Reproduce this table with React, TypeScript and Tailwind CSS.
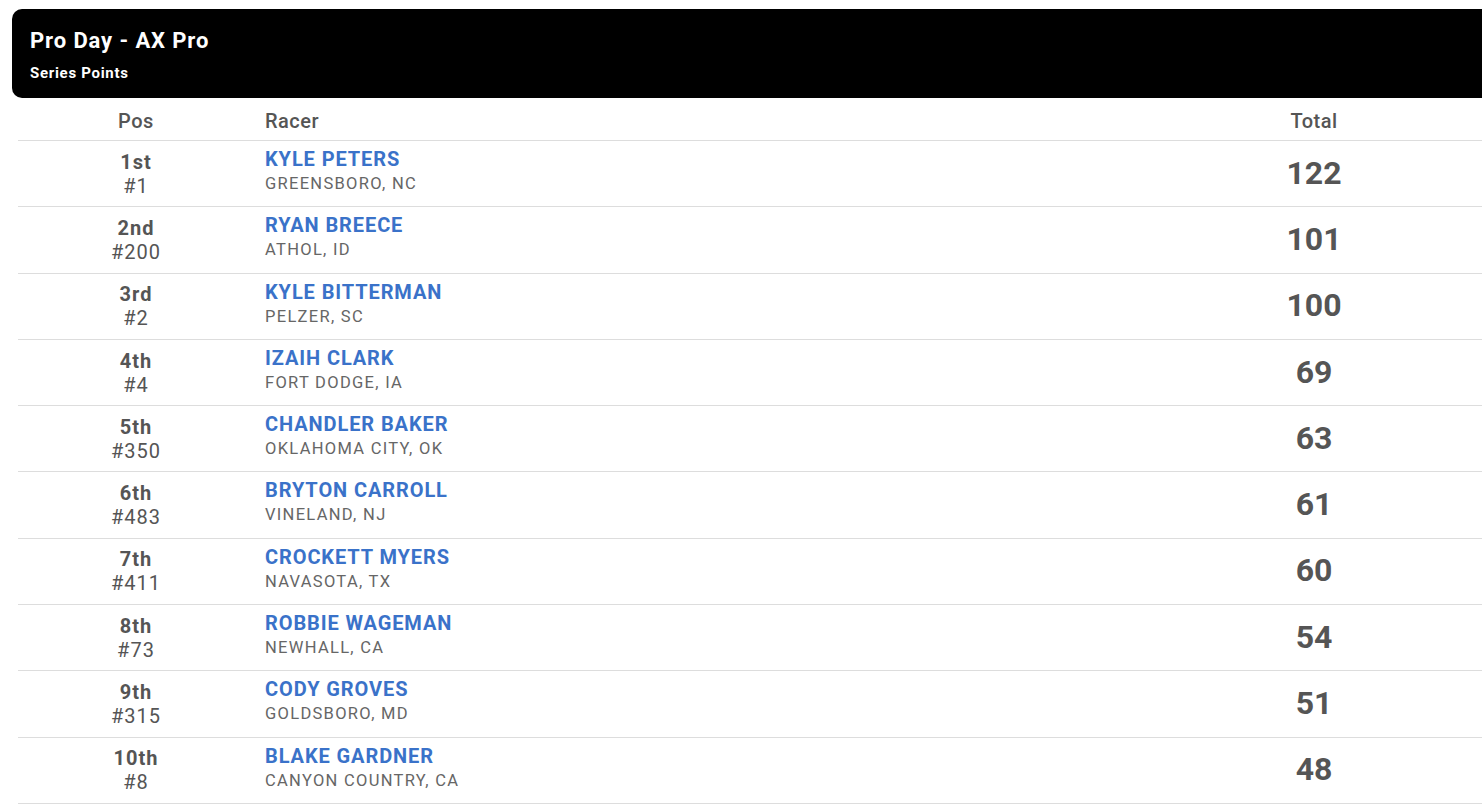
import React from 'react';

type Racer = { pos: string; num: string; name: string; city: string; total: number };

const racers: Racer[] = [
  { pos: '1st', num: '#1', name: 'KYLE PETERS', city: 'GREENSBORO, NC', total: 122 },
  { pos: '2nd', num: '#200', name: 'RYAN BREECE', city: 'ATHOL, ID', total: 101 },
  { pos: '3rd', num: '#2', name: 'KYLE BITTERMAN', city: 'PELZER, SC', total: 100 },
  { pos: '4th', num: '#4', name: 'IZAIH CLARK', city: 'FORT DODGE, IA', total: 69 },
  { pos: '5th', num: '#350', name: 'CHANDLER BAKER', city: 'OKLAHOMA CITY, OK', total: 63 },
  { pos: '6th', num: '#483', name: 'BRYTON CARROLL', city: 'VINELAND, NJ', total: 61 },
  { pos: '7th', num: '#411', name: 'CROCKETT MYERS', city: 'NAVASOTA, TX', total: 60 },
  { pos: '8th', num: '#73', name: 'ROBBIE WAGEMAN', city: 'NEWHALL, CA', total: 54 },
  { pos: '9th', num: '#315', name: 'CODY GROVES', city: 'GOLDSBORO, MD', total: 51 },
  { pos: '10th', num: '#8', name: 'BLAKE GARDNER', city: 'CANYON COUNTRY, CA', total: 48 },
];

const App = () => {
  return (
    <div className="w-[1482px] h-[806px] overflow-hidden bg-white font-['Roboto',sans-serif]">
      <div className="pt-[9px] pl-3 w-[1520px]">
        {/* header bar */}
        <div className="bg-black text-white rounded-l-[10px] h-[89px] pl-[18px] pt-[18px]">
          <div className="text-[22px] font-bold leading-[28px] tracking-[0.9px]">Pro Day - AX Pro</div>
          <div className="text-[15px] font-bold leading-[18px] mt-[9px] tracking-[0.7px]">Series Points</div>
        </div>

        <div className="ml-[6px]">
          <div className="grid grid-cols-[236px_1000px_120px_1fr] h-[43px] items-center pt-[4px] border-b border-[#dddddd] text-[20px] font-medium text-[#555555] tracking-[0.5px]">
            <div className="text-center">Pos</div>
            <div className="pl-[11px]">Racer</div>
            <div className="text-center">Total</div>
            <div />
          </div>

          {racers.map((r) => (
            <div
              key={r.pos}
              className="grid grid-cols-[236px_1000px_120px_1fr] h-[66.3px] items-center border-b border-[#dddddd]"
            >
              <div className="text-center text-[#555555] text-[20px] leading-[24px] tracking-[1px]">
                <div className="font-bold">{r.pos}</div>
                <div>{r.num}</div>
              </div>
              <div className="pl-[11px] self-start pt-[6px]">
                <div className="text-[20px] font-bold text-[#3a72c9] leading-[24px] tracking-[0.9px]">{r.name}</div>
                <div className="text-[16.5px] text-[#666666] leading-[20px] mt-[3px] tracking-[1.3px]">{r.city}</div>
              </div>
              <div className="text-center text-[32px] font-bold text-[#555555] leading-[38px] pb-[2px]">{r.total}</div>
              <div />
            </div>
          ))}
        </div>
      </div>
    </div>
  );
};

export default App;
